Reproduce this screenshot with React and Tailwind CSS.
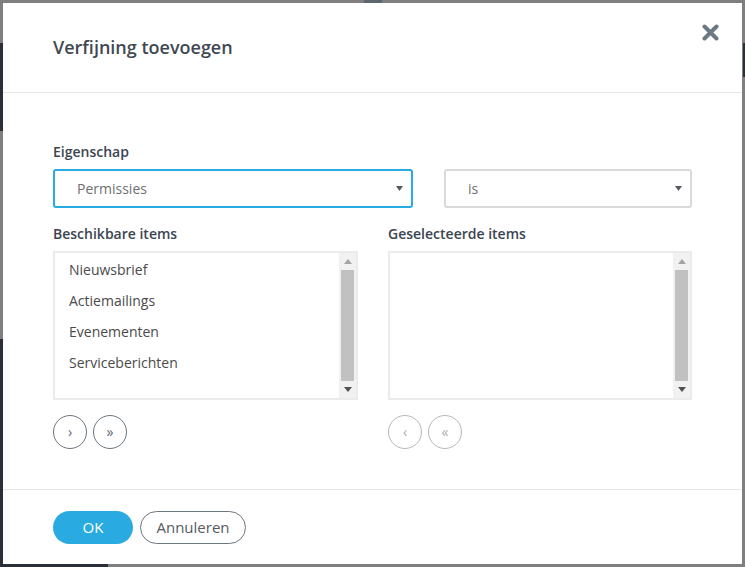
import React from "react";

function Scrollbar() {
  return (
    <div className="w-[17px] h-full bg-[#f1f1f1] flex flex-col items-center">
      <div className="h-[17px] w-full flex items-center justify-center">
        <svg width="8" height="5" viewBox="0 0 8 5"><polygon points="0,5 8,5 4,0" fill="#a3a3a3" /></svg>
      </div>
      <div className="flex-1 w-[13px] bg-[#c1c1c1]" />
      <div className="h-[17px] w-full flex items-center justify-center">
        <svg width="8" height="5" viewBox="0 0 8 5"><polygon points="0,0 8,0 4,5" fill="#505050" /></svg>
      </div>
    </div>
  );
}

function ListBox({ items }) {
  return (
    <div className="h-[149px] border-2 border-[#ebebeb] flex bg-white">
      <div className="flex-1 pl-[14px] pt-[1px]">
        {items.map((t) => (
          <div key={t} className="h-[31px] leading-[31px] text-[14px] text-[#4a4a4a]">
            {t}
          </div>
        ))}
      </div>
      <Scrollbar />
    </div>
  );
}

function Select({ value, focused, className }) {
  return (
    <div
      className={
        "h-[39px] rounded-[3px] border-2 flex items-center justify-between pl-[22px] pr-[8px] " +
        (focused ? "border-[#29abe2] " : "border-[#d9d9d9] ") +
        className
      }
    >
      <span className="text-[14px] text-[#6f6f6f]">{value}</span>
      <svg width="7" height="5" viewBox="0 0 7 5"><polygon points="0,0 7,0 3.5,5" fill="#555b61" /></svg>
    </div>
  );
}

function CircleBtn({ children, disabled }) {
  return (
    <div
      className={
        "w-[34px] h-[34px] rounded-full border flex items-center justify-center text-[14px] leading-none " +
        (disabled ? "border-[#b4b8bc] text-[#a9adb1]" : "border-[#6c7680] text-[#5b6570]")
      }
    >
      {children}
    </div>
  );
}

export default function App() {
  return (
    <div
      className="relative w-[745px] h-[567px] bg-[#7f7f7f] p-[3px]"
      style={{ fontFamily: '"Open Sans", "Noto Sans", sans-serif' }}
    >
      {/* background decorations behind overlay */}
      <div className="absolute left-0 top-[43px] w-[3px] h-[88px] bg-[#2b3038]" />
      <div className="absolute left-0 top-[339px] w-[3px] h-[228px] bg-[#2b3038]" />
      <div className="absolute left-0 bottom-0 w-[108px] h-[3px] bg-[#2b3038]" />
      <div className="absolute right-0 top-[43px] w-[2px] h-[34px] bg-[#2b3038]" />
      <div className="absolute left-[364px] top-0 w-[18px] h-[3px] bg-[#5d6570]" />

      <div className="relative w-full h-full bg-white flex flex-col">
        {/* header */}
        <div className="h-[90px] shrink-0 flex items-center px-[50px] border-b border-[#e8e8e8]">
          <h1 className="text-[18px] font-semibold text-[#3f4852] -mt-[1px]">Verfijning toevoegen</h1>
        </div>
        <div className="absolute top-[21px] right-[23px] w-[17px] h-[17px]">
          <svg width="17" height="17" viewBox="0 0 17 17">
            <path d="M2.5 2.5 L14.5 14.5 M14.5 2.5 L2.5 14.5" stroke="#6c7884" strokeWidth="4" strokeLinecap="round" />
          </svg>
        </div>

        {/* body */}
        <div className="flex-1 pl-[50px] pr-[50px] pt-[49px]">
          <div className="text-[14px] font-semibold text-[#3b4550] leading-[20px] mb-[7px]">Eigenschap</div>
          <div className="flex gap-[31px]">
            <Select value="Permissies" focused className="w-[360px]" />
            <Select value="is" className="w-[248px]" />
          </div>

          <div className="grid grid-cols-[305px_304px] gap-x-[30px] mt-[16px]">
            <div>
              <div className="text-[14px] font-semibold text-[#3b4550] leading-[20px] mb-[7px]">Beschikbare items</div>
              <ListBox items={["Nieuwsbrief", "Actiemailings", "Evenementen", "Serviceberichten"]} />
              <div className="flex gap-[6px] mt-[15px]">
                <CircleBtn>›</CircleBtn>
                <CircleBtn>»</CircleBtn>
              </div>
            </div>
            <div>
              <div className="text-[14px] font-semibold text-[#3b4550] leading-[20px] mb-[7px]">Geselecteerde items</div>
              <ListBox items={[]} />
              <div className="flex gap-[6px] mt-[15px]">
                <CircleBtn disabled>‹</CircleBtn>
                <CircleBtn disabled>«</CircleBtn>
              </div>
            </div>
          </div>
        </div>

        {/* footer */}
        <div className="h-[75px] shrink-0 border-t border-[#e8e8e8] flex items-center px-[50px] gap-[7px]">
          <button className="w-[80px] h-[33px] rounded-full bg-[#29abe2] text-white text-[15px]">OK</button>
          <button className="w-[106px] h-[33px] rounded-full border border-[#6c7680] text-[#555b61] text-[15px]">
            Annuleren
          </button>
        </div>
      </div>
    </div>
  );
}
